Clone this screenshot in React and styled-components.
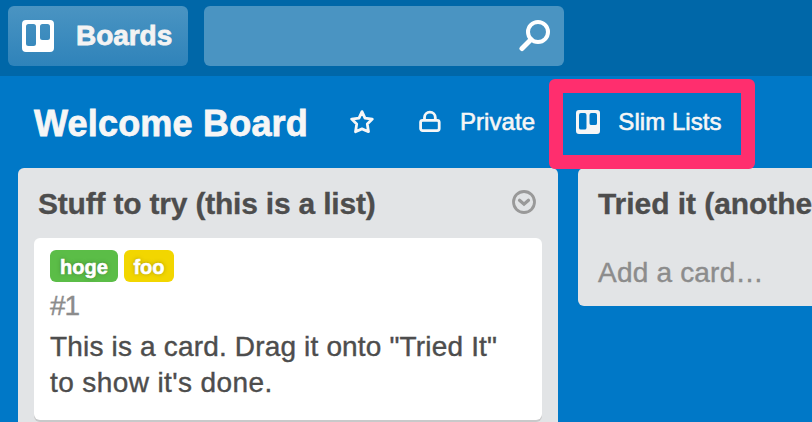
import React from 'react';
import styled, { createGlobalStyle } from 'styled-components';

const GlobalStyle = createGlobalStyle`
  *, *::before, *::after { box-sizing: border-box; }
  body {
    margin: 0;
    overflow: hidden;
    background: #0078c7;
    font-family: "Liberation Sans", Arial, sans-serif;
    color: #4d4d4d;
  }
`;

const Page = styled.div`
  height: 422px;
  overflow: hidden;
`;

const Header = styled.header`
  display: flex;
  gap: 16px;
  height: 76px;
  padding: 6px 8px;
  background: #0067a8;
`;

const BoardsButton = styled.button`
  display: flex;
  align-items: center;
  gap: 22px;
  width: 180px;
  height: 60px;
  padding: 0 0 0 14px;
  border: 0;
  border-radius: 6px;
  background: linear-gradient(#4a94c2, #2f83ba);
  color: #fff;
  font: bold 28px/60px "Liberation Sans", Arial, sans-serif;
  letter-spacing: -0.05px;
`;

const ButtonText = styled.span`
  color: #f3f3f3;
  -webkit-text-stroke: 0.8px #f3f3f3;
`;

const SearchBox = styled.div`
  display: flex;
  align-items: center;
  justify-content: flex-end;
  width: 360px;
  height: 60px;
  padding-right: 13px;
  border-radius: 6px;
  background: #4a94c2;
`;

const BoardBar = styled.div`
  display: flex;
  align-items: center;
  height: 92px;
  padding-left: 34px;
  color: #f6f6f6;
`;

const BoardTitle = styled.h1`
  width: 316px;
  margin: 4px 0 0;
  font-size: 36px;
  line-height: 44px;
  letter-spacing: 0.2px;
  -webkit-text-stroke: 0.8px #f6f6f6;
  white-space: nowrap;
`;

const BarItem = styled.div`
  display: flex;
  align-items: center;
  gap: ${(p) => p.$gap || 0}px;
  margin-right: ${(p) => p.$after || 0}px;
  font-size: 24px;
  line-height: 32px;
  letter-spacing: 0.05px;
  white-space: nowrap;
  -webkit-text-stroke: 0.6px #f6f6f6;
`;

const Highlighted = styled(BarItem)`
  position: relative;
  &::after {
    content: "";
    position: absolute;
    z-index: 2;
    left: -27px;
    top: -27px;
    width: 206px;
    height: 90px;
    border: 14px solid #ff2e6e;
    border-radius: 6px;
  }
`;

const Lists = styled.main`
  display: flex;
  align-items: flex-start;
  gap: 20px;
  padding-left: 18px;
`;

const List = styled.section`
  flex: none;
  width: ${(p) => p.$width}px;
  height: ${(p) => p.$height}px;
  padding: 0 16px;
  border-radius: ${(p) => (p.$clipped ? '6px 0 0 6px' : '6px')};
  background: #e2e4e6;
`;

const ListHeader = styled.div`
  display: flex;
  align-items: center;
  justify-content: space-between;
  height: 70px;
  padding: 0 6px 0 4px;
`;

const ListTitle = styled.h2`
  margin: 2px 0 0;
  font-size: 30px;
  line-height: 36px;
  letter-spacing: ${(p) => p.$spacing}px;
  white-space: nowrap;
  -webkit-text-stroke: 0.3px #4d4d4d;
`;

const MenuSlot = styled.div`
  display: flex;
  margin-top: -3px;
`;

const Card = styled.article`
  height: 182px;
  padding: 12px 16px;
  border-radius: 6px;
  background: #fff;
  box-shadow: 0 2px 0 #c8c9ca;
`;

const Labels = styled.div`
  display: flex;
  gap: 6px;
`;

const Label = styled.span`
  width: ${(p) => p.$width}px;
  height: 32px;
  border-radius: 6px;
  background: ${(p) => p.$color};
  color: #fff;
  font-size: 20px;
  font-weight: bold;
  line-height: 34px;
  text-align: center;
  text-shadow: 0 0 5px rgba(0, 0, 0, 0.25), 0 0 2px rgba(0, 0, 0, 0.2);
  -webkit-text-stroke: 0.6px #fff;
`;

const CardNumber = styled.div`
  margin-top: 6px;
  color: #8c8c8c;
  font-size: 28px;
  line-height: 36px;
  letter-spacing: -1px;
  -webkit-text-stroke: 0.4px #8c8c8c;
`;

const CardText = styled.p`
  margin: 5px 0 0;
  font-size: 28px;
  line-height: 36px;
  letter-spacing: 0.17px;
  white-space: nowrap;
  -webkit-text-stroke: 0.4px #4d4d4d;
`;

const LastLine = styled.span`
  letter-spacing: 0.4px;
`;

const AddCard = styled.div`
  padding: 17px 4px;
  color: #8c8c8c;
  font-size: 28px;
  line-height: 36px;
  letter-spacing: 0.2px;
  -webkit-text-stroke: 0.4px #8c8c8c;
`;

function BoardIcon({ size }) {
  return (
    <svg width={size} height={size} viewBox="0 0 32 32">
      <path
        fill="currentColor"
        fillRule="evenodd"
        d="M4 0h24a4 4 0 0 1 4 4v24a4 4 0 0 1-4 4H4a4 4 0 0 1-4-4V4a4 4 0 0 1 4-4ZM6.500 4A2.500 2.500 0 0 0 4 6.500v17A2.500 2.500 0 0 0 6.500 26h5a2.500 2.500 0 0 0 2.500-2.500v-17A2.500 2.500 0 0 0 11.500 4ZM20.500 4A2.500 2.500 0 0 0 18 6.500v11a2.500 2.500 0 0 0 2.500 2.500h5a2.500 2.500 0 0 0 2.500-2.500v-11A2.500 2.500 0 0 0 25.500 4Z"
      />
    </svg>
  );
}

function SearchIcon() {
  return (
    <svg width="32" height="32" viewBox="0 0 32 32" fill="none" stroke="#fff">
      <circle cx="19" cy="12" r="10" strokeWidth="4" />
      <path d="M12 19.500 3 28.500" strokeWidth="5" strokeLinecap="round" />
    </svg>
  );
}

function StarIcon() {
  return (
    <svg width="24" height="24" viewBox="0 0 24 24" fill="none" stroke="currentColor" strokeWidth="2.800" strokeLinejoin="round">
      <path d="m12 1.600 3 6.500 7.300 1-5 5 1.200 7.600-6.500-2.800-6.500 2.800 1.200-7.600-5-5 7.300-1Z" />
    </svg>
  );
}

function LockIcon() {
  return (
    <svg width="22" height="24" viewBox="0 0 22 24" fill="none" stroke="currentColor" strokeWidth="2.800">
      <rect x="1.600" y="10.300" width="18.600" height="10.300" rx="2" />
      <path d="M5.500 10V7.500a5.400 5.400 0 0 1 10.800 0V10" />
    </svg>
  );
}

function MenuIcon() {
  return (
    <svg width="24" height="24" viewBox="0 0 24 24" fill="none" stroke="#999" strokeWidth="2.800">
      <circle cx="12" cy="12" r="10.500" />
      <path d="m7.500 10.200 4.500 4 4.500-4" strokeWidth="3.200" strokeLinecap="round" />
    </svg>
  );
}

export default function App() {
  return (
    <Page>
      <GlobalStyle />
      <Header>
        <BoardsButton>
          <BoardIcon size={32} />
          <ButtonText>Boards</ButtonText>
        </BoardsButton>
        <SearchBox>
          <SearchIcon />
        </SearchBox>
      </Header>
      <BoardBar>
        <BoardTitle>Welcome Board</BoardTitle>
        <BarItem $after={45}>
          <StarIcon />
        </BarItem>
        <BarItem $gap={19} $after={41.3}>
          <LockIcon />
          Private
        </BarItem>
        <Highlighted $gap={18}>
          <BoardIcon size={24} />
          Slim Lists
        </Highlighted>
      </BoardBar>
      <Lists>
        <List $width={540} $height={300}>
          <ListHeader>
            <ListTitle $spacing={-0.2}>Stuff to try (this is a list)</ListTitle>
            <MenuSlot>
              <MenuIcon />
            </MenuSlot>
          </ListHeader>
          <Card>
            <Labels>
              <Label $width={68} $color="#5bbd47">hoge</Label>
              <Label $width={50} $color="#f2d600">foo</Label>
            </Labels>
            <CardNumber>#1</CardNumber>
            <CardText>
              This is a card. Drag it onto "Tried It"
              <br />
              <LastLine>to show it's done.</LastLine>
            </CardText>
          </Card>
        </List>
        <List $width={234} $height={138} $clipped>
          <ListHeader>
            <ListTitle $spacing={-0.05}>Tried it (anothe</ListTitle>
          </ListHeader>
          <AddCard>Add a card…</AddCard>
        </List>
      </Lists>
    </Page>
  );
}
